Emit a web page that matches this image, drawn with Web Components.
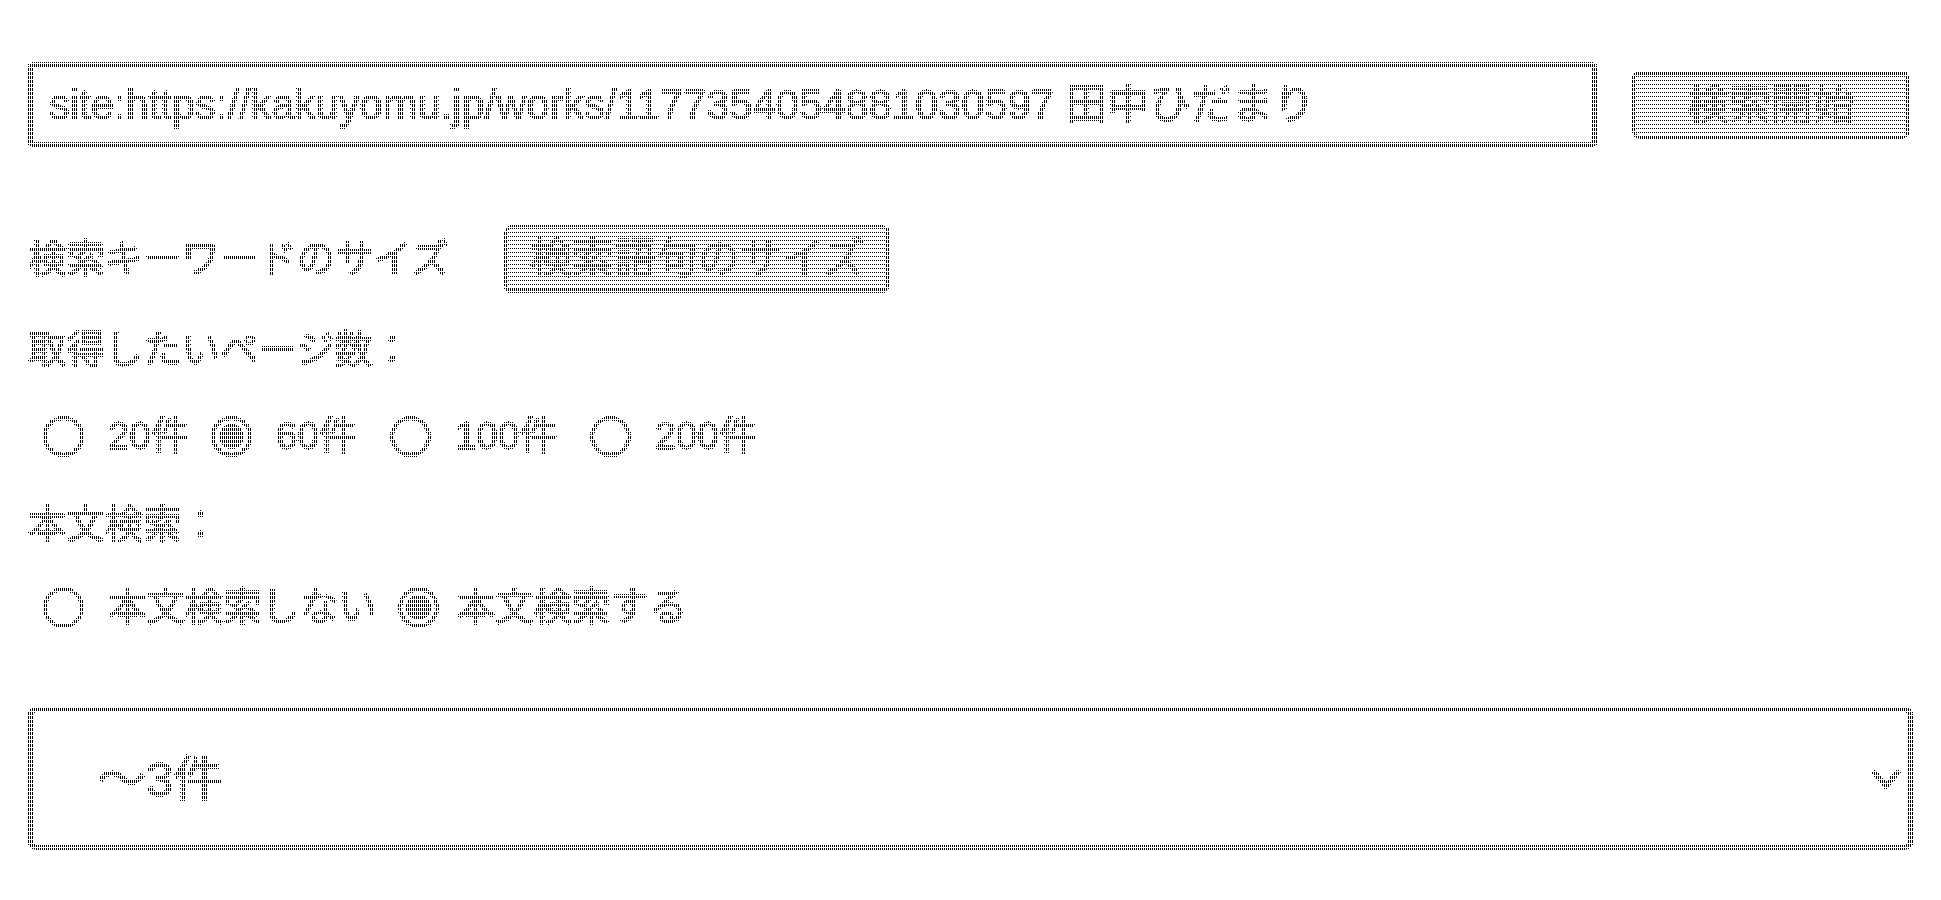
<!DOCTYPE html>
<html lang="ja">
<head>
<meta charset="utf-8">
<title>検索</title>
<style>
    html, body { margin: 0; background: #fff; }
</style>
</head>
<body>
<dither-screen>
    <form-row top="62" gap="35">
        <text-box style="width:1569px">site:https://kakuyomu.jp/works/1177354054881030597 田中ひだまり</text-box>
        <action-button width="278" height="68">検索開始</action-button>
    </form-row>
    <form-row top="78" gap="55">
        <field-label>検索キーワードのサイズ</field-label>
        <action-button width="386" height="68">検索語句のサイズ</action-button>
    </form-row>
    <form-row top="35"><field-label>取得したいページ数：</field-label></form-row>
    <form-row top="39" indent="15">
        <radio-option style="--after:22px">20件</radio-option>
        <radio-option style="--after:33px" checked>60件</radio-option>
        <radio-option style="--after:32px">100件</radio-option>
        <radio-option>200件</radio-option>
    </form-row>
    <form-row top="42"><field-label>本文検索：</field-label></form-row>
    <form-row top="35" indent="15">
        <radio-option style="--after:21px">本文検索しない</radio-option>
        <radio-option style="--text-gap:18px" checked>本文検索する</radio-option>
    </form-row>
    <form-row top="75"><select-box>～3件</select-box></form-row>
</dither-screen>

<script>
const FONT = '"Liberation Sans", "Noto Sans CJK JP", sans-serif';

class DitherScreen extends HTMLElement {
    constructor() {
        super();
        this.attachShadow({ mode: 'open' });
        this.shadowRoot.innerHTML = `
            <style>
                :host {
                    display: block;
                    position: relative;
                    width: 1941px;
                    height: 900px;
                    padding: 0 28px;
                    box-sizing: border-box;
                    overflow: hidden;
                    background: #fff;
                    color: #000;
                    font: 38.4px/44px ${FONT};
                    -webkit-text-stroke: 1px #000;
                    filter: grayscale(1) brightness(1.02) contrast(100);
                }
                .tile {
                    position: absolute;
                    inset: 0;
                    opacity: .5;
                    pointer-events: none;
                    background-color: #666;
                    background-image:
                        linear-gradient(90deg, transparent 1px, #fff 1px),
                        linear-gradient(transparent 3px, #fff 3px),
                        linear-gradient(#0a0a0a 1px, transparent 1px);
                    background-size: 2px 4px;
                }
            </style>
            <slot></slot>
            <div class="tile"></div>
        `;
    }
}

class FormRow extends HTMLElement {
    constructor() {
        super();
        this.attachShadow({ mode: 'open' });
    }

    connectedCallback() {
        const top = this.getAttribute('top') || 0;
        const gap = this.getAttribute('gap') || 0;
        const indent = this.getAttribute('indent') || 0;
        this.shadowRoot.innerHTML = `
            <style>
                :host {
                    display: flex;
                    align-items: center;
                    margin-top: ${top}px;
                    gap: ${gap}px;
                    padding-left: ${indent}px;
                }
            </style>
            <slot></slot>
        `;
    }
}

class TextBox extends HTMLElement {
    constructor() {
        super();
        this.attachShadow({ mode: 'open' });
        this.shadowRoot.innerHTML = `
            <style>
                :host {
                    display: flex;
                    align-items: center;
                    flex: none;
                    box-sizing: border-box;
                    height: 85px;
                    padding: 0 16px;
                    border: 5px solid #767676;
                    border-radius: 5px;
                    font-size: 41.7px;
                    white-space: nowrap;
                }
            </style>
            <slot></slot>
        `;
    }
}

class ActionButton extends HTMLElement {
    constructor() {
        super();
        this.attachShadow({ mode: 'open' });
    }

    connectedCallback() {
        this.shadowRoot.innerHTML = `
            <style>
                :host {
                    display: flex;
                    align-items: center;
                    justify-content: center;
                    flex: none;
                    box-sizing: border-box;
                    width: ${this.getAttribute('width')}px;
                    height: ${this.getAttribute('height')}px;
                    border: 4px solid #767676;
                    border-radius: 8px;
                    background: #e9e9e9;
                    font-size: 42px;
                    white-space: nowrap;
                }
            </style>
            <slot></slot>
        `;
    }
}

class FieldLabel extends HTMLElement {
    constructor() {
        super();
        this.attachShadow({ mode: 'open' });
        this.shadowRoot.innerHTML = `
            <style>
                :host { display: block; white-space: nowrap; }
            </style>
            <slot></slot>
        `;
    }
}

class RadioOption extends HTMLElement {
    constructor() {
        super();
        this.attachShadow({ mode: 'open' });
        this.shadowRoot.innerHTML = `
            <style>
                :host {
                    display: flex;
                    align-items: center;
                    height: 50px;
                    white-space: nowrap;
                    margin-right: var(--after, 28px);
                }
                .ring {
                    box-sizing: border-box;
                    width: 41px;
                    height: 41px;
                    margin-right: var(--text-gap, 24px);
                    padding: 4px;
                    border: 4px solid #767676;
                    border-radius: 50%;
                }
                .dot {
                    display: none;
                    width: 100%;
                    height: 100%;
                    border-radius: 50%;
                    background: #333;
                }
                :host([checked]) .dot { display: block; }
            </style>
            <div class="ring"><div class="dot"></div></div>
            <slot></slot>
        `;
    }
}

class SelectBox extends HTMLElement {
    constructor() {
        super();
        this.attachShadow({ mode: 'open' });
        this.shadowRoot.innerHTML = `
            <style>
                :host {
                    display: flex;
                    align-items: center;
                    justify-content: space-between;
                    flex: 1;
                    box-sizing: border-box;
                    height: 143px;
                    padding: 0 7px 0 64px;
                    border: 5px solid #767676;
                    border-radius: 8px;
                    font-size: 49px;
                }
            </style>
            <slot></slot>
            <svg width="30" height="24" viewBox="0 0 30 24" fill="none" stroke="#000" stroke-width="5">
                <path d="M2 4 L15 19 L28 4"/>
            </svg>
        `;
    }
}

customElements.define('dither-screen', DitherScreen);
customElements.define('form-row', FormRow);
customElements.define('text-box', TextBox);
customElements.define('action-button', ActionButton);
customElements.define('field-label', FieldLabel);
customElements.define('radio-option', RadioOption);
customElements.define('select-box', SelectBox);
</script>
</body>
</html>
